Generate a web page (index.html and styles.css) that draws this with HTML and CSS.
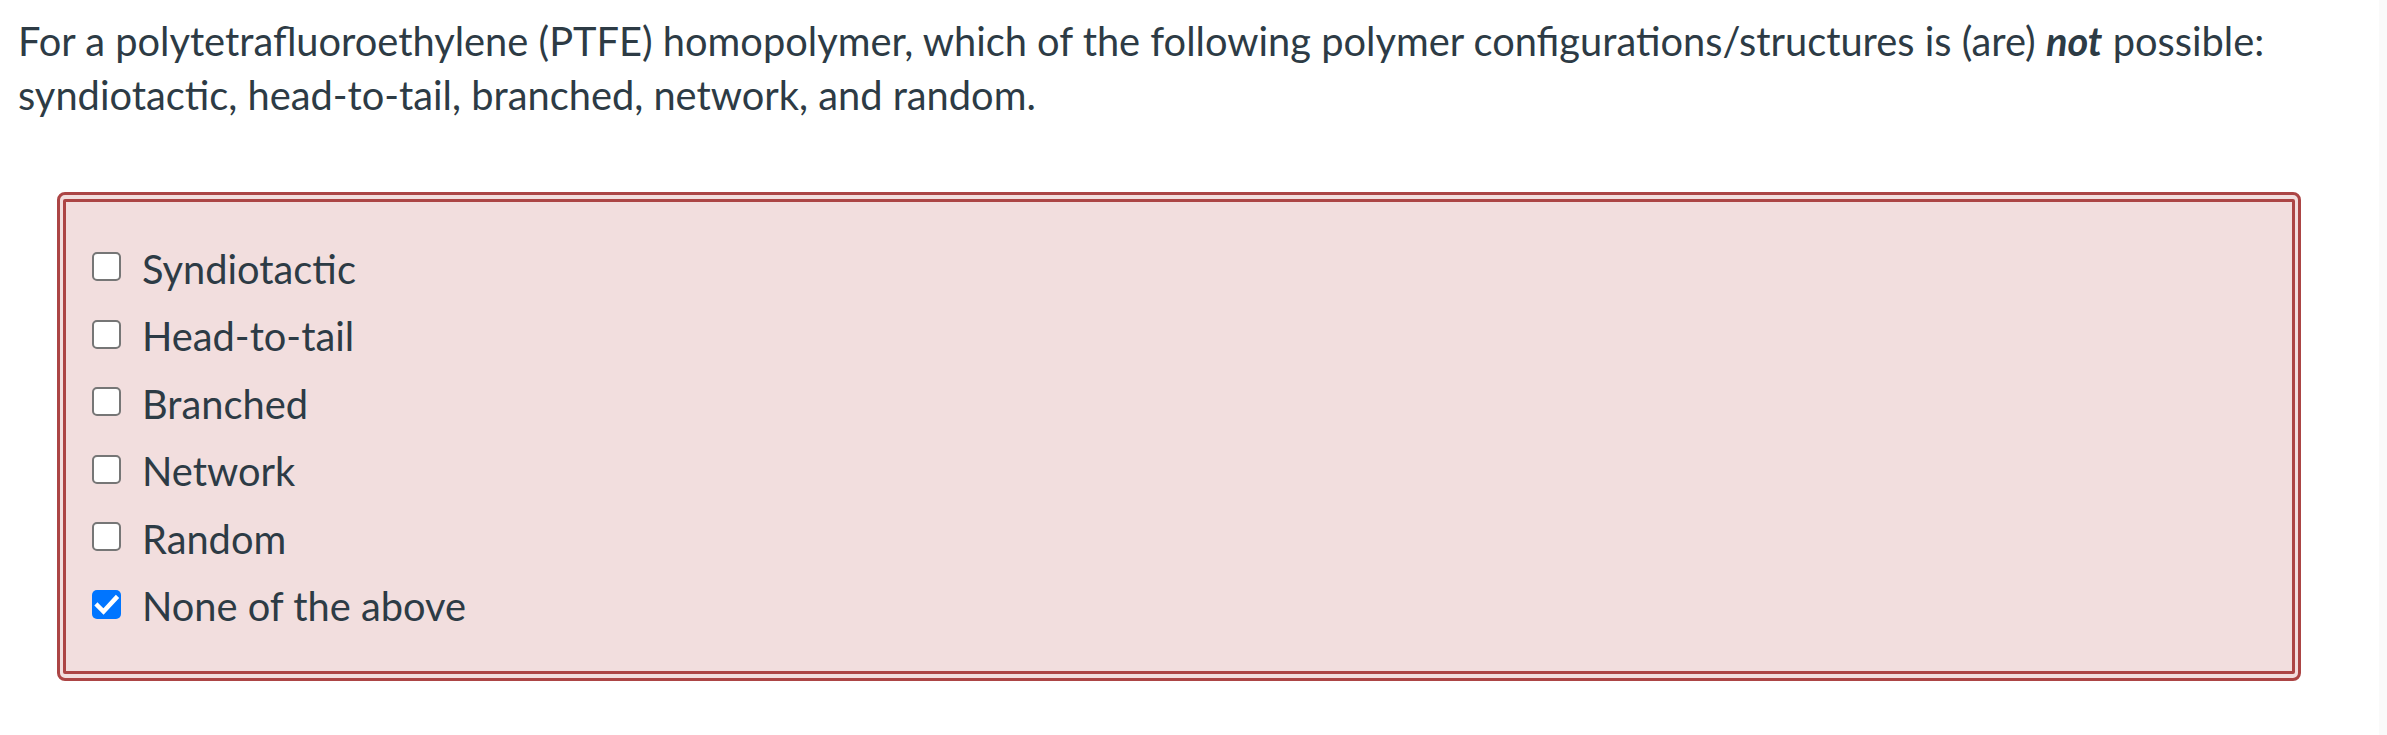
FILE: index.html
```html
<!DOCTYPE html>
<html>
<head>
<meta charset="utf-8">
<link rel="stylesheet" href="styles.css">
</head>
<body>
<div class="page">
  <main class="main">
    <div class="question">For a polytetrafluoroethylene (PTFE) homopolymer, which of the following polymer configurations/structures is (are) <strong><em>not</em></strong> possible:<br>syndiotactic, head-to-tail, branched, network, and random.</div>
    <div class="answer-outer">
      <div class="answer-inner">
        <div class="option"><span class="box"></span><span class="label">Syndiotactic</span></div>
        <div class="option"><span class="box"></span><span class="label">Head-to-tail</span></div>
        <div class="option"><span class="box"></span><span class="label">Branched</span></div>
        <div class="option"><span class="box"></span><span class="label">Network</span></div>
        <div class="option"><span class="box"></span><span class="label">Random</span></div>
        <div class="option"><span class="box checked"><svg viewBox="0 0 29 29" width="29" height="29"><polyline points="5.5,15.5 11.5,21.5 24,8" fill="none" stroke="#fff" stroke-width="4.5" stroke-linecap="square" stroke-linejoin="miter"/></svg></span><span class="label">None of the above</span></div>
      </div>
    </div>
  </main>
  <div class="gutter"></div>
</div>
</body>
</html>
```

FILE: styles.css
```css
html, body {
  margin: 0;
  padding: 0;
  background: #ffffff;
}
body {
  font-family: Lato, "Liberation Sans", sans-serif;
  color: #2d3b45;
}
.page {
  display: flex;
  height: 735px;
}
.main {
  flex: 1;
}
.gutter {
  width: 8px;
  background: #fafafa;
}
.question {
  font-size: 39.8px;
  line-height: 54px;
  padding: 14px 0 0 18px;
}
.question strong {
  font-weight: 700;
}
.answer-outer {
  margin: 70px 78px 0 57px;
  border: 3px solid #ac4545;
  border-radius: 8px;
  padding: 4px 3px 4px 3px;
  background: #f2dede;
}
.answer-inner {
  border: 3px solid #ac4545;
  border-radius: 2px;
  background: #f2dede;
  padding: 31px 0 33px 26px;
}
.option {
  display: flex;
  align-items: center;
  height: 67.5px;
  font-size: 39.8px;
  line-height: 67.5px;
}
.box {
  width: 29px;
  height: 29px;
  box-sizing: border-box;
  border: 2px solid #767676;
  border-radius: 5px;
  background: #ffffff;
  margin-right: 21px;
  flex: none;
  position: relative;
}
.box.checked {
  border: none;
  background: #0075ff;
}
.box.checked svg {
  display: block;
}
.label {
  padding-top: 3px;
}
```
